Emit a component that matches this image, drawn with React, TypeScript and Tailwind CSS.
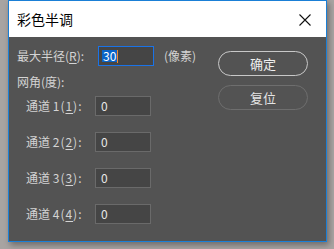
import React from 'react';

const font = { fontFamily: '"Noto Sans CJK SC", "Noto Sans", sans-serif' };

const Field = ({ value }: { value: string }) => (
  <div className="w-[56px] h-[20px] bg-[#454545] border border-[#6a6a6a] flex items-center pl-[5px] text-[12px] text-[#e8e8e8] leading-none">
    {value}
  </div>
);

const ChannelRow = ({ n }: { n: number }) => (
  <div className="flex items-center h-[20px]">
    <span className="w-[78px] pl-[9px] text-[12px] text-[#d4d4d4] whitespace-nowrap">
      通道 <span className="tracking-[1px]">{n}(<span className="underline underline-offset-2">{n}</span>):</span>
    </span>
    <Field value="0" />
  </div>
);

export default function App() {
  return (
    <div className="w-[334px] h-[249px] bg-[#a8a4a2] overflow-hidden" style={font}>
      <div className="ml-[8px] w-[319px] h-[242px] border border-[#1a7fd6] flex flex-col shadow-[2px_3px_6px_rgba(0,0,0,0.35)]">
        {/* title bar */}
        <div className="h-[36px] bg-white flex items-center justify-between pl-[8px] pr-[15px] shrink-0">
          <span className="text-[14px] text-black">彩色半调</span>
          <svg width="12" height="12" viewBox="0 0 12 12" className="mt-[1px]">
            <path d="M0.5 0.5 L11.5 11.5 M11.5 0.5 L0.5 11.5" stroke="#111" strokeWidth="1.1" fill="none" />
          </svg>
        </div>

        {/* body */}
        <div className="flex-1 bg-[#535353] flex">
          <div className="w-[209px] pl-[8px] pt-[9px] flex flex-col">
            <div className="flex items-center h-[20px]">
              <span className="w-[81px] text-[12px] text-[#d4d4d4] whitespace-nowrap">
                最大半径(<span className="underline underline-offset-2">R</span>):
              </span>
              <div className="w-[56px] h-[20px] bg-[#454545] border border-[#1a73e8] flex items-center pl-[3px] text-[12px] leading-none">
                <span className="bg-[#0a64c8] text-white px-[1px]">30</span>
                <span className="w-[1px] h-[13px] bg-[#f08a30]" />
              </div>
              <span className="ml-[10px] text-[12px] text-[#d4d4d4] whitespace-nowrap">(像素)</span>
            </div>
            <div className="h-[16px] mt-[8px] flex items-center text-[12px] text-[#d4d4d4]">网角(度):</div>
            <div className="mt-[6px] flex flex-col gap-[16px]">
              <ChannelRow n={1} />
              <ChannelRow n={2} />
              <ChannelRow n={3} />
              <ChannelRow n={4} />
            </div>
          </div>
          <div className="pt-[14px] flex flex-col gap-[9px]">
            <button className="w-[90px] h-[25px] rounded-full border-[1.5px] border-[#c8c8c8] text-[13px] text-[#eeeeee] flex items-center justify-center">
              确定
            </button>
            <button className="w-[90px] h-[25px] rounded-full border border-[#6e6e6e] text-[13px] text-[#e4e4e4] flex items-center justify-center">
              复位
            </button>
          </div>
        </div>
      </div>
    </div>
  );
}
